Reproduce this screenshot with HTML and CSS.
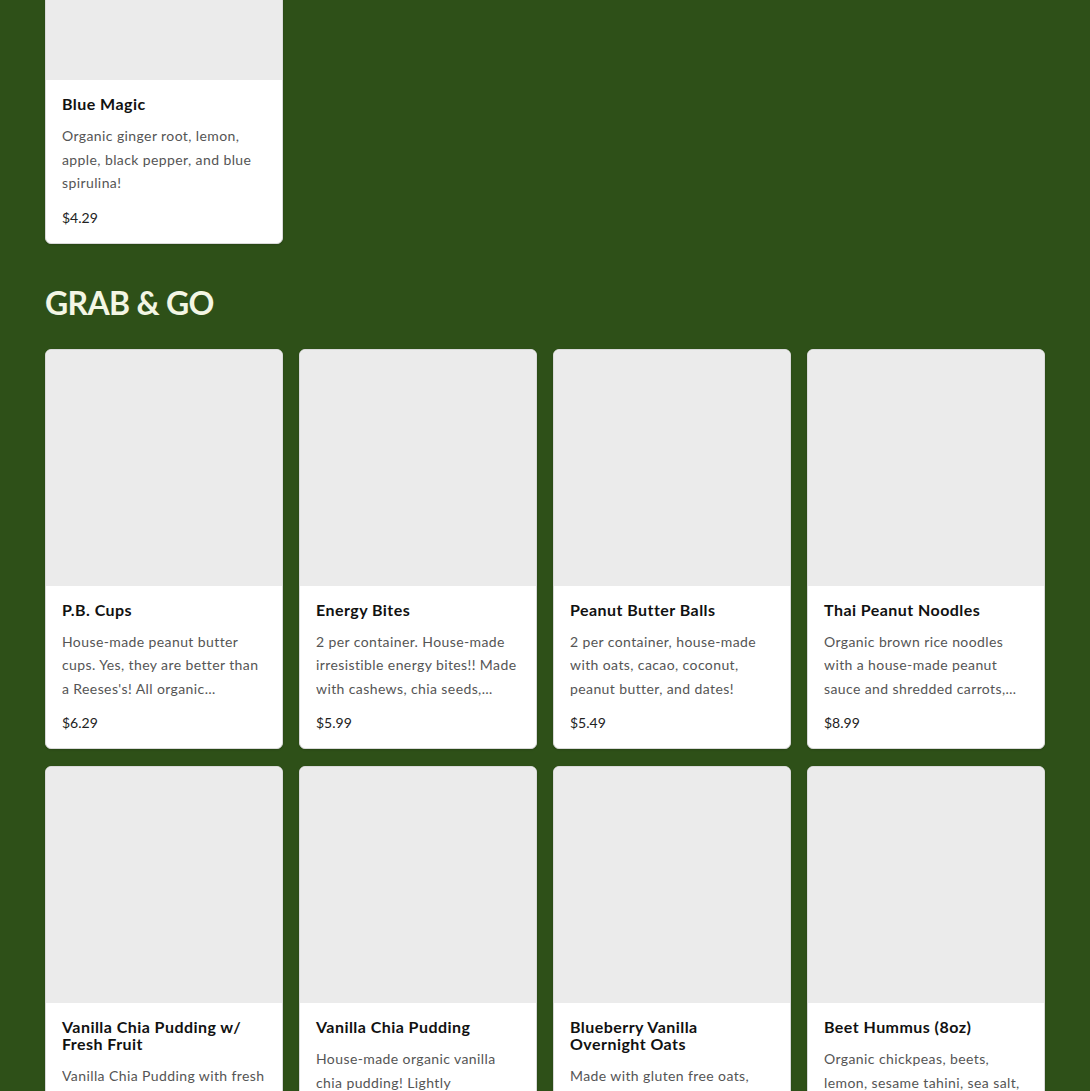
FILE: index.html
```html
<!DOCTYPE html>
<html>
<head>
<meta charset="utf-8">
<link rel="stylesheet" href="styles.css">
</head>
<body>
<main class="menu">
  <section class="section section-scrolled">
    <div class="grid">
      <article class="card">
        <div class="card-img"></div>
        <div class="card-body">
          <h3 class="card-title">Blue Magic</h3>
          <p class="card-desc">Organic ginger root, lemon, apple, black pepper, and blue spirulina!</p>
          <p class="card-price">$4.29</p>
        </div>
      </article>
    </div>
  </section>

  <section class="section">
    <h2 class="section-title">GRAB &amp; GO</h2>
    <div class="grid">
      <article class="card">
        <div class="card-img"></div>
        <div class="card-body">
          <h3 class="card-title">P.B. Cups</h3>
          <p class="card-desc">House-made peanut butter cups. Yes, they are better than a Reeses's! All organic ingredients, dark chocolate and peanut butter.</p>
          <p class="card-price">$6.29</p>
        </div>
      </article>
      <article class="card">
        <div class="card-img"></div>
        <div class="card-body">
          <h3 class="card-title">Energy Bites</h3>
          <p class="card-desc">2 per container. House-made irresistible energy bites!! Made with cashews, chia seeds, coconut, dates and cacao.</p>
          <p class="card-price">$5.99</p>
        </div>
      </article>
      <article class="card">
        <div class="card-img"></div>
        <div class="card-body">
          <h3 class="card-title">Peanut Butter Balls</h3>
          <p class="card-desc">2 per container, house-made with oats, cacao, coconut, peanut butter, and dates!</p>
          <p class="card-price">$5.49</p>
        </div>
      </article>
      <article class="card">
        <div class="card-img"></div>
        <div class="card-body">
          <h3 class="card-title">Thai Peanut Noodles</h3>
          <p class="card-desc">Organic brown rice noodles with a house-made peanut sauce and shredded carrots, cabbage and cilantro.</p>
          <p class="card-price">$8.99</p>
        </div>
      </article>
      <article class="card">
        <div class="card-img"></div>
        <div class="card-body">
          <h3 class="card-title">Vanilla Chia Pudding w/ Fresh Fruit</h3>
          <p class="card-desc">Vanilla Chia Pudding with fresh seasonal fruit on top. All organic.</p>
          <p class="card-price">$6.99</p>
        </div>
      </article>
      <article class="card">
        <div class="card-img"></div>
        <div class="card-body">
          <h3 class="card-title">Vanilla Chia Pudding</h3>
          <p class="card-desc">House-made organic vanilla chia pudding! Lightly sweetened with maple syrup.</p>
          <p class="card-price">$5.49</p>
        </div>
      </article>
      <article class="card">
        <div class="card-img"></div>
        <div class="card-body">
          <h3 class="card-title">Blueberry Vanilla Overnight Oats</h3>
          <p class="card-desc">Made with gluten free oats, chia seeds, almond milk and blueberries.</p>
          <p class="card-price">$6.49</p>
        </div>
      </article>
      <article class="card">
        <div class="card-img"></div>
        <div class="card-body">
          <h3 class="card-title">Beet Hummus (8oz)</h3>
          <p class="card-desc">Organic chickpeas, beets, lemon, sesame tahini, sea salt, garlic and olive oil.</p>
          <p class="card-price">$7.99</p>
        </div>
      </article>
    </div>
  </section>
</main>
</body>
</html>
```

FILE: styles.css
```css
* { box-sizing: border-box; }
html, body {
  margin: 0;
  padding: 0;
  background: #2e5018;
}
body {
  font-family: "Lato", "Open Sans", sans-serif;
  overflow: hidden;
  height: 1091px;
}
.menu {
  width: 1000px;
  margin: 0 auto;
}
.section-scrolled {
  margin-top: -157px;
}
.section-title {
  margin: 38px 0 26px;
  font-size: 32px;
  line-height: 41px;
  font-weight: 700;
  color: #f3f6e4;
  letter-spacing: -0.7px;
}
.grid {
  display: grid;
  grid-template-columns: repeat(4, 238px);
  column-gap: 16px;
  row-gap: 17px;
}
.card {
  background: #fff;
  border: 1px solid #d9d9d9;
  border-radius: 6px;
  overflow: hidden;
  display: flex;
  flex-direction: column;
  box-shadow: 0 1px 2px rgba(0, 0, 0, 0.15);
}
.card-img {
  height: 236px;
  background: #ebebeb;
}
.card-body {
  padding: 15px 16px 16px;
}
.card-title {
  margin: 0 0 12px;
  font-size: 16px;
  line-height: 17px;
  font-weight: 700;
  color: #111;
  letter-spacing: 0.45px;
}
.card-desc {
  margin: 0 0 14px;
  font-size: 14px;
  line-height: 23.5px;
  color: #555;
  letter-spacing: 0.4px;
  display: -webkit-box;
  -webkit-line-clamp: 3;
  -webkit-box-orient: vertical;
  overflow: hidden;
}
.card-price {
  margin: 0;
  font-size: 14px;
  line-height: 18px;
  color: #222;
}
```
